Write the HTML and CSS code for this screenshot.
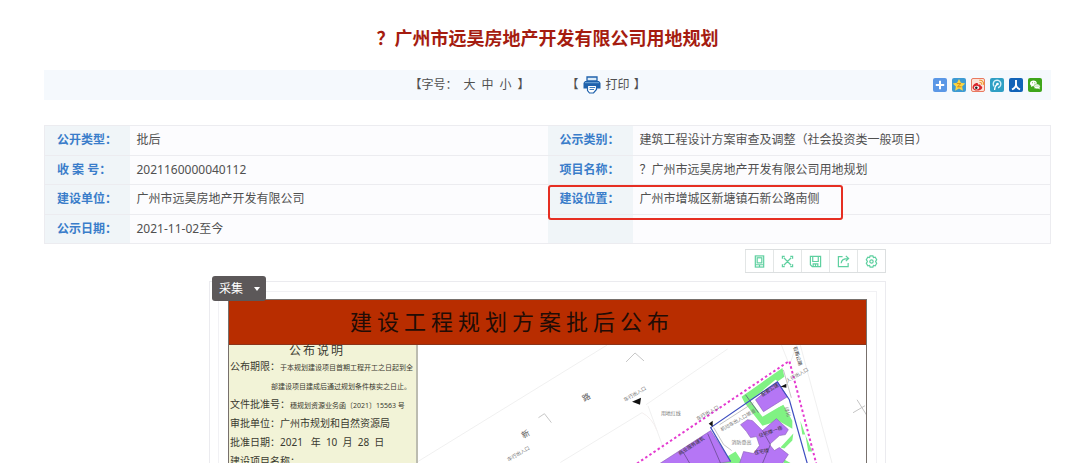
FILE: index.html
```html
<!DOCTYPE html>
<html lang="zh-CN">
<head>
<meta charset="utf-8">
<title>广州市远昊房地产开发有限公司用地规划</title>
<link rel="stylesheet" href="styles.css">
</head>
<body>
<main class="page">
  <h1 class="title">？广州市远昊房地产开发有限公司用地规划</h1>

  <div class="bar">
    <div class="bar-tools">
      <div class="font-size">
        <span>【字号：</span>
        <button type="button">大</button>
        <button type="button">中</button>
        <button type="button">小</button>
        <span>】</span>
      </div>
      <div class="print">
        <span>【</span>
        <button type="button" class="print-btn">
          <svg width="18" height="18" viewBox="0 0 18 18" aria-hidden="true">
            <path d="M4 1h10v4H4z" fill="#dcecf8" stroke="#1f62ac" stroke-width="1.3"/>
            <path d="M2 5h14l1.500 2v5.500H14V9H4v3.500H.5V7z" fill="#1f62ac"/>
            <path d="M2 6.700h14" stroke="#7eb2df" stroke-width=".9"/>
            <path d="M4.500 9.500h9v4l-3 3.500h-4l-2-2.500z" fill="#fff" stroke="#1f62ac" stroke-width="1.2"/>
            <path d="M6.500 11.500h5.500M6.500 13.500h4.500" stroke="#3f80c0"/>
          </svg>
          打印
        </button>
        <span>】</span>
      </div>
    </div>
    <div class="share">
      <a href="#" aria-label="更多分享"><svg width="14" height="14" viewBox="0 0 14 14"><rect width="14" height="14" rx="2" fill="#5b98e6"/><path d="M7 2.800v8.400M2.800 7h8.400" stroke="#fff" stroke-width="2"/></svg></a>
      <a href="#" aria-label="QQ空间"><svg width="14" height="14" viewBox="0 0 14 14"><rect width="14" height="14" rx="2" fill="#3d9bd3"/><path d="M7 .9l1.900 3.900 4.300.6-3.100 3 .8 4.300L7 10.600l-3.900 2.100.8-4.300-3.100-3 4.300-.6z" fill="#fbd643"/><path d="M4.800 5.600h4L5.500 8.800h4" fill="none" stroke="#d58a12"/></svg></a>
      <a href="#" aria-label="新浪微博"><svg width="14" height="14" viewBox="0 0 14 14"><rect x=".5" y=".5" width="13" height="13" rx="1.500" fill="#fbe3d9" stroke="#e9795f"/><path d="M1.500 9.500c0-2.500 3-5 4.800-4.500.8.200.8 1 .6 1.700 1.600-.6 2.900-.3 2.700 1 1.300.4 2 1.200 1.500 2.500-1.500 3.300-9.600 3.300-9.600-.7z" fill="#d9262c"/><ellipse cx="5.600" cy="9.600" rx="2.600" ry="1.900" fill="#fff"/><circle cx="5.300" cy="9.800" r="1.300" fill="#222"/><path d="M8.500 4.500c1.600-.3 2.500.6 2.300 2.200M8.300 2.400c2.800-.5 4.800 1.500 4.300 4.500" fill="none" stroke="#f09a2a" stroke-width="1.100"/></svg></a>
      <a href="#" aria-label="腾讯微博"><svg width="14" height="14" viewBox="0 0 14 14"><rect width="14" height="14" rx="2" fill="#2f9fc4"/><path d="M4.600 12c0-2.800 1-4.600 2.900-6" fill="none" stroke="#fff" stroke-width="1.300"/><path d="M4 8.300A3.800 3.800 0 1 1 8 9.700" fill="none" stroke="#d4f0fa" stroke-width="1.400"/><circle cx="7.500" cy="6" r="1.300" fill="#fff"/></svg></a>
      <a href="#" aria-label="人人网"><svg width="14" height="14" viewBox="0 0 14 14"><rect width="14" height="14" rx="2" fill="#1163b8"/><path d="M7 2v4.500c0 2-1.500 3.800-4 5M7 6.500c0 2 1.500 3.800 4 5" fill="none" stroke="#fff" stroke-width="1.900"/></svg></a>
      <a href="#" aria-label="微信"><svg width="14" height="14" viewBox="0 0 14 14"><rect width="14" height="14" rx="2" fill="#3fa61b"/><path d="M5.500 2.500C3.400 2.500 2 3.800 2 5.400c0 .9.500 1.700 1.200 2.200L3 9l1.400-.8c1.500.3 4.500-.7 4.500-2.800 0-1.600-1.400-2.900-3.400-2.900z" fill="#fff"/><ellipse cx="9" cy="8.400" rx="3.100" ry="2.500" fill="#fff" stroke="#3fa61b" stroke-width=".5"/><path d="M10 10l1.500 1.500v-2z" fill="#fff"/><circle cx="4.500" cy="4.800" r=".5" fill="#3fa61b"/><circle cx="6.800" cy="4.800" r=".5" fill="#3fa61b"/><circle cx="8" cy="7.900" r=".5" fill="#3fa61b"/><circle cx="10" cy="7.900" r=".5" fill="#3fa61b"/></svg></a>
    </div>
  </div>

  <table class="info">
    <colgroup><col class="c-label"><col class="c-first"><col class="c-label"><col></colgroup>
    <tr><th scope="row">公开类型：</th><td>批后</td><th scope="row">公示类别：</th><td>建筑工程设计方案审查及调整（社会投资类一般项目）</td></tr>
    <tr><th scope="row">收 案 号：</th><td>2021160000040112</td><th scope="row">项目名称：</th><td>？广州市远昊房地产开发有限公司用地规划</td></tr>
    <tr><th scope="row">建设单位：</th><td>广州市远昊房地产开发有限公司</td><th scope="row" class="marked">建设位置：<span class="marker"></span></th><td>广州市增城区新塘镇石新公路南侧</td></tr>
    <tr><th scope="row">公示日期：</th><td>2021-11-02至今</td><th></th><td></td></tr>
  </table>

  <section class="viewer">
    <div class="toolbar">
      <button type="button" aria-label="手机查看"><svg viewBox="0 0 14 14"><rect x="2.500" y="1" width="9" height="12"/><rect x="4.500" y="3" width="5" height="5.500"/><path d="M2.500 10.500h9M7 10.500V13"/></svg></button>
      <button type="button" aria-label="全屏"><svg viewBox="0 0 14 14"><path d="M3 3l8 8M11 3l-8 8M1.500 4V1.500H4M10 1.500h2.500V4M12.500 10v2.500H10M4 12.500H1.500V10"/></svg></button>
      <button type="button" aria-label="保存"><svg viewBox="0 0 14 14"><path d="M1.500 1.500h11v11h-9l-2-2zM4 1.500v5.500h6V1.500M4.500 12.500V9.500h5v3M7 9.500v3"/></svg></button>
      <button type="button" aria-label="分享"><svg viewBox="0 0 14 14"><path d="M6 1.800H1.500v10.700h10.500V8.500M4.500 9c0-3.500 2.500-5.200 7.500-5.200M9.500 1l3 2.800-3 2.800"/></svg></button>
      <button type="button" aria-label="设置"><svg viewBox="0 0 14 14"><path d="M5.500 1h3l.6 1.700 1.900-.3L12.600 5l-1.200 2 1.200 2-1.600 2.600-1.900-.3L8.500 13h-3l-.6-1.700-1.900.3L1.400 9l1.200-2-1.200-2L3 2.400l1.900.3z"/><circle cx="7" cy="7" r="1.800"/></svg></button>
    </div>

    <div class="frame">
      <button type="button" class="collect">采集<span class="caret"></span></button>
      <div class="frame-inner">
        <article class="poster">
          <h2 class="poster-title">建设工程规划方案批后公布</h2>
          <div class="poster-body">
            <div class="notice">
              <h3>公布说明</h3>
              <p>公布期限：<small>于本规划建设项目首期工程开工之日起到全</small></p>
              <p class="cont"><small>部建设项目建成后通过规划条件核实之日止。</small></p>
              <p>文件批准号：<small>穗规划资源业务函〔2021〕15563 号</small></p>
              <p>审批单位：广州市规划和自然资源局</p>
              <p>批准日期：2021 &nbsp; 年 &nbsp;10 &nbsp;月 &nbsp;28 &nbsp;日</p>
              <p>建设项目名称：</p>
            </div>
            <svg class="map" viewBox="417 344 450 119" preserveAspectRatio="xMinYMin slice" role="img" aria-label="规划总平面图">
              <g fill="none" stroke="#f0f0f0">
                <path d="M417 461L607 344M560 462L642 412M646 404L728 348M648 405l16 44M782 344l8 20M801 344l32 119M797 344l-6 18"/>
                <path d="M642 412q10 5 15 18" stroke="#f4efef"/>
                <path d="M626 361l9-9 9 8M538 417l6-4 7 9" stroke="#c6c6c6"/>
                <path d="M854 412l12-7M858 399l10 16" stroke="#c4c4c4"/>
              </g>
              <g fill="#80f283">
                <path d="M742 396L783 367l2 9-30 21 9 16 20-9 9 16v8l-14-8-16 5-18-23z"/>
                <path d="M716 463l20-12 8 12zM781 447l13-14-1 7-8 8zM785 459l7 4h-8zM801 420l5 14h-3zM806 434l7 17h-4z"/>
              </g>
              <path d="M751 400l25-21 5 3 11 17-29 17z" fill="#fff"/>
              <g fill="#b576f5" stroke="#875bb5" stroke-width=".6">
                <path d="M756 399l22-18 10 15-24 15z"/>
                <path d="M741 424l7-5 5 1 10 10 14-12 12 11-3 5-6 1-10 9 5 6 5-3 9 7-6 9h-43l4-12 10 2 6-8-3-9-6 1-4-6z"/>
                <path d="M660 463l51-33 20 31-14 2z"/>
              </g>
              <path d="M708 433l13 30M683 451l7 12M746 394l13 18M763 430l8 14-8 19" fill="none" stroke="#5e4582" stroke-width=".7"/>
              <path d="M731 461L711 427 778 381 790 399 808 463" fill="none" stroke="#3e4ec0" stroke-width="1.200"/>
              <path d="M720 424l34-22M714 427l10 17 8 6M784 369l8 28" fill="none" stroke="#aaa" stroke-width=".7"/>
              <path d="M637 463L790 360l27 103" fill="none" stroke="#e43ad0" stroke-width="2" stroke-dasharray="2.500 2.500"/>
              <path d="M632 401l9-4-1 7zM781 386l6-3v4zM709 423l4-3v6z" fill="#111"/>
              <g class="map-text">
                <text transform="translate(523 438) rotate(-30)" class="road">新</text>
                <text transform="translate(584 401) rotate(-30)" class="road">路</text>
                <text x="661" y="414">用地红线</text>
                <text transform="translate(625 401) rotate(-30)">车行出入口</text>
                <text transform="translate(508 461) rotate(-30)">车行出入口</text>
                <text transform="translate(698 420) rotate(-30)">车行出入口</text>
                <text transform="translate(788 382) rotate(-30)">人行出入口</text>
                <text transform="translate(680 455) rotate(-33)" class="on-fill">商业服务建筑</text>
                <text transform="translate(722 431) rotate(-30)">机动车出入口坡道</text>
                <text transform="translate(763 396) rotate(-33)" class="on-fill">配套公建</text>
                <text transform="translate(760 437) rotate(-20)" class="on-fill">住宅楼一栋</text>
                <text transform="translate(755 454) rotate(-10)" class="on-fill">住宅楼</text>
                <text x="732" y="443">消防登高</text>
                <text transform="translate(794 346) rotate(74)" class="on-fill">石新公路</text>
                <text transform="translate(785 407) rotate(72)">绿化</text>
              </g>
            </svg>
          </div>
        </article>
      </div>
    </div>
  </section>
</main>
</body>
</html>
```
FILE: styles.css
```css
* { box-sizing: border-box; }

body {
  margin: 0;
  background: #fff;
  color: #505050;
  font: 12px/18px "Noto Sans", "Noto Sans CJK SC", sans-serif;
}

button {
  padding: 0;
  border: 0;
  background: none;
  color: inherit;
  font: inherit;
  cursor: pointer;
}

h1, h2, h3, p { margin: 0; font-weight: normal; }
svg { display: block; }

.page {
  display: flex;
  flex-direction: column;
  height: 100vh;
  overflow: hidden;
  padding: 24px 29px 0 44px;
}

.title {
  margin-bottom: 18px;
  color: #a51c10;
  font-size: 18px;
  line-height: 28px;
  font-weight: bold;
  text-align: center;
}

.bar {
  display: flex;
  align-items: center;
  justify-content: space-between;
  flex: none;
  height: 30px;
  margin-bottom: 25px;
  padding: 0 9px 0 36%;
  background: #f5f9fd;
}
.bar-tools { display: flex; gap: 37px; padding-left: 3px; }
.font-size, .print, .print-btn { display: flex; align-items: center; }
.font-size { gap: 6px; }
.print { gap: 4px; }
.print-btn { gap: 5px; }
.share { display: flex; gap: 5px; padding-bottom: 1px; }

.info {
  flex: none;
  width: 100%;
  height: 119px;
  border-collapse: collapse;
  table-layout: fixed;
  border: 1px solid #ececf0;
}
.c-label { width: 85px; }
.c-first { width: 418px; }
.info tr { border-bottom: 1px solid #ececf0; }
.info th, .info td { padding: 0 7px; text-align: left; }
.info td { background: #fcfcfe; }
.info th {
  padding: 0 0 0 12px;
  background: #f0f5f8;
  color: #3a7dca;
  font-weight: bold;
}
.marked { position: relative; }
.marker {
  position: absolute;
  top: 0;
  left: 0;
  width: 295px;
  height: 35px;
  border: 2px solid #e62e22;
  border-radius: 3px;
}

.viewer {
  width: 100%;
  max-width: 677px;
  margin: 5px auto 0;
  flex: 1;
  min-height: 0;
  display: flex;
  flex-direction: column;
}
.toolbar {
  display: flex;
  align-self: flex-end;
  margin-bottom: 8px;
  border: solid #dcdfe0;
  border-width: 1px 1px 1px 0;
}
.toolbar button {
  display: grid;
  place-items: center;
  width: 28px;
  height: 22px;
  border-left: 1px solid #e3e6e6;
}
.toolbar svg {
  width: 13px;
  height: 13px;
  fill: none;
  stroke: #5fd0a0;
  stroke-width: 1.3;
}

.frame {
  position: relative;
  flex: 1;
  min-height: 0;
  padding: 9px 8px 0;
  border: 1px solid #ebebef;
  border-bottom: 0;
}
.frame-inner {
  height: 100%;
  padding: 7px 9px 0;
  border: 1px solid #f1f1f4;
  border-bottom: 0;
}
.collect {
  position: absolute;
  top: -6px;
  left: 2px;
  display: flex;
  align-items: center;
  gap: 11px;
  height: 25px;
  padding: 0 6px 0 7px;
  border-radius: 3px;
  background: #5c5859;
  color: #fff;
}
.caret {
  border: 3px solid transparent;
  border-top: 4px solid #fff;
  border-bottom: 0;
}

.poster {
  display: flex;
  flex-direction: column;
  height: 100%;
  overflow: hidden;
  border: 1px solid #77706c;
  border-bottom: 0;
  color: #3a3a30;
}
.poster-title {
  flex: none;
  height: 45px;
  padding-left: 19%;
  background: #b82d00;
  border-bottom: 1px solid #8c3318;
  color: #210c06;
  font-size: 22px;
  line-height: 43px;
  letter-spacing: 5px;
}
.poster-body { display: flex; flex: 1; min-height: 0; }
.notice {
  flex: none;
  width: 189px;
  padding-left: 1px;
  border-right: 2px solid #bcbcb0;
  background: #f2f3d7;
  font-size: 10px;
  line-height: 19px;
  white-space: nowrap;
}
.notice h3 {
  padding-right: 12px;
  font-size: 12px;
  line-height: 12px;
  letter-spacing: 2px;
  text-align: center;
}
.notice small { font-size: 7px; }
.notice p { height: 19px; }
.notice .cont { padding-left: 41px; }

.map { flex: 1; min-width: 0; height: 100%; }
.map-text { fill: #777; font-size: 5px; }
.map-text .road { fill: #555; font-size: 8px; }
.map-text .on-fill { fill: #333; }
```
